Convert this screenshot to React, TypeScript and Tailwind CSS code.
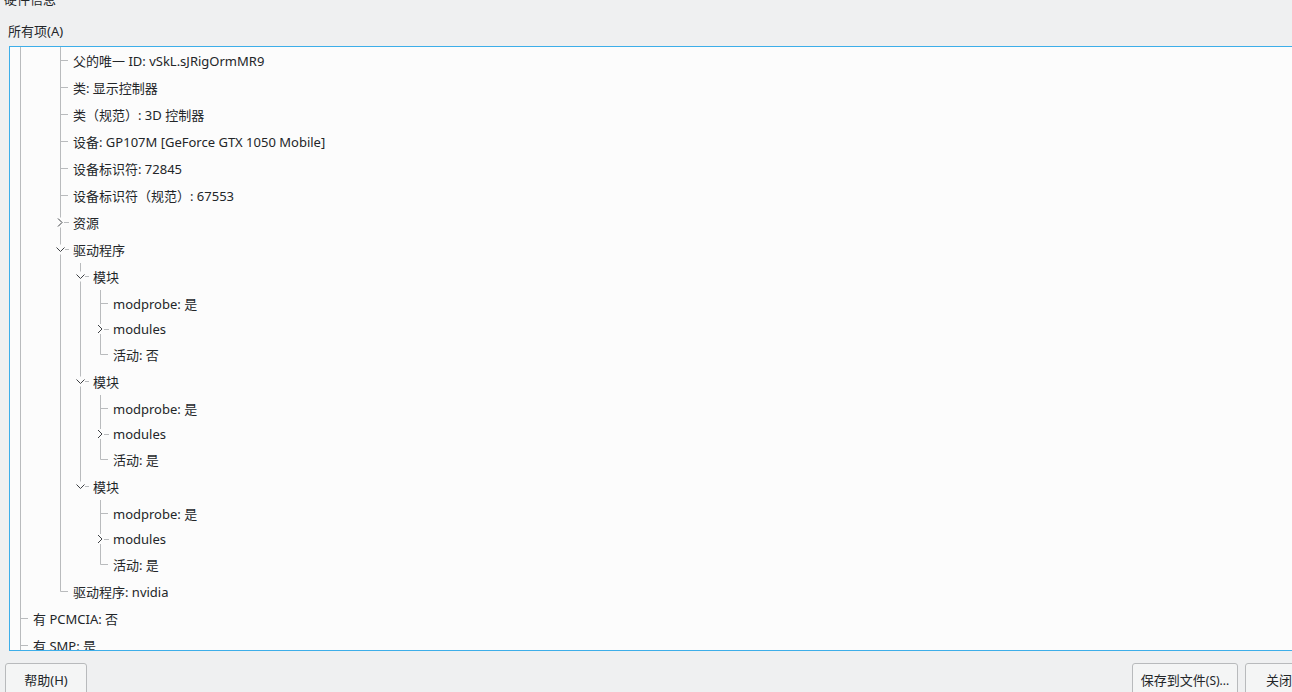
import React from "react";

type Row = {
  depth: number;
  text: string;
  cont: boolean[]; // vertical pass-through lines for ancestor columns
  last?: boolean; // own branch ends at this row
  arrow?: "open" | "closed";
  short?: boolean; // latin-only rows are a bit shorter
};

const L2 = [true, false];
const L3 = [true, false, true];
const L4 = [true, false, true, true];
const L4end = [true, false, true, false];

const ROWS: Row[] = [
  { depth: 2, cont: L2, text: "父的唯一 ID: vSkL.sJRigOrmMR9" },
  { depth: 2, cont: L2, text: "类: 显示控制器" },
  { depth: 2, cont: L2, text: "类（规范）: 3D 控制器" },
  { depth: 2, cont: L2, text: "设备: GP107M [GeForce GTX 1050 Mobile]" },
  { depth: 2, cont: L2, text: "设备标识符: 72845" },
  { depth: 2, cont: L2, text: "设备标识符（规范）: 67553" },
  { depth: 2, cont: L2, text: "资源", arrow: "closed" },
  { depth: 2, cont: L2, text: "驱动程序", arrow: "open" },
  { depth: 3, cont: L3, text: "模块", arrow: "open" },
  { depth: 4, cont: L4, text: "modprobe: 是" },
  { depth: 4, cont: L4, text: "modules", arrow: "closed", short: true },
  { depth: 4, cont: L4, text: "活动: 否", last: true },
  { depth: 3, cont: L3, text: "模块", arrow: "open" },
  { depth: 4, cont: L4, text: "modprobe: 是" },
  { depth: 4, cont: L4, text: "modules", arrow: "closed", short: true },
  { depth: 4, cont: L4, text: "活动: 是", last: true },
  { depth: 3, cont: L3, text: "模块", arrow: "open", last: true },
  { depth: 4, cont: L4end, text: "modprobe: 是" },
  { depth: 4, cont: L4end, text: "modules", arrow: "closed", short: true },
  { depth: 4, cont: L4end, text: "活动: 是", last: true },
  { depth: 2, cont: L2, text: "驱动程序: nvidia", last: true },
  { depth: 0, cont: [], text: "有 PCMCIA: 否" },
  { depth: 0, cont: [], text: "有 SMP: 是" },
];

const LINE = "#b9bbbd";
const INK = "#3d4044";

function Branch({ row, h }: { row: Row; h: number }) {
  const c = h / 2;
  const crisp = Math.floor(c) + 0.5;
  if (!row.arrow) {
    return (
      <svg width={20} height={h} className="shrink-0 block">
        <line x1={10.5} y1={0} x2={10.5} y2={row.last ? crisp : h} stroke={LINE} />
        <line x1={10.5} y1={crisp} x2={18} y2={crisp} stroke={LINE} />
      </svg>
    );
  }
  return (
    <svg width={20} height={h} className="shrink-0 block">
      <line x1={10.5} y1={0} x2={10.5} y2={c - 5} stroke={LINE} />
      {!row.last && <line x1={10.5} y1={c + 5} x2={10.5} y2={h} stroke={LINE} />}
      {row.arrow === "closed" ? (
        <>
          <polyline points={`8,${c - 4} 12,${c} 8,${c + 4}`} fill="none" stroke={INK} strokeWidth={1} />
          <line x1={14} y1={crisp} x2={19} y2={crisp} stroke={LINE} />
        </>
      ) : (
        <>
          <polyline points={`6.5,${c - 2} 10.5,${c + 2} 14.5,${c - 2}`} fill="none" stroke={INK} strokeWidth={1} />
          <line x1={15} y1={crisp} x2={19} y2={crisp} stroke={LINE} />
        </>
      )}
    </svg>
  );
}

function TreeRow({ row }: { row: Row }) {
  const h = row.short ? 24 : 27;
  const cols = Array.from({ length: row.depth }, (_, k) => k);
  return (
    <div className={`flex items-center ${row.short ? "h-[24px]" : "h-[27px]"}`}>
      {cols.map((k) => (
        <svg key={k} width={20} height={h} className="shrink-0 block">
          {row.cont[k] && <line x1={10.5} y1={0} x2={10.5} y2={h} stroke={LINE} />}
        </svg>
      ))}
      <Branch row={row} h={h} />
      <span className="pl-[3px] whitespace-nowrap relative top-[1px]">{row.text}</span>
    </div>
  );
}

export default function App() {
  return (
    <div
      className="w-[1292px] h-[692px] overflow-hidden bg-[#eff0f1] text-[#232629] text-[13px]"
      style={{ fontFamily: '"Noto Sans", "Noto Sans CJK SC", sans-serif' }}
    >
      <div className="w-[1318px] flex flex-col">
        <div className="h-[18px] -mt-[10px] leading-[18px] pl-[4px]">硬件信息</div>
        <div className="h-[18px] mt-[14px] leading-[18px] pl-[8px]">所有项(A)</div>

        <div className="mt-[6px] ml-[9px] mr-[5px] h-[605px] border border-[#3daee9] bg-[#fcfcfc] overflow-hidden">
          {ROWS.map((r, i) => (
            <TreeRow key={i} row={r} />
          ))}
        </div>

        <div className="mt-[12px] flex items-start px-[5px]">
          <button className="w-[82px] h-[36px] border border-[#b8babc] rounded-[3px] bg-[#f4f5f5] text-[13px] text-[#232629]">
            帮助(H)
          </button>
          <div className="flex-1" />
          <button className="w-[106px] h-[36px] border border-[#b8babc] rounded-[3px] bg-[#f4f5f5] text-[13px] text-[#232629] whitespace-nowrap">
            保存到文件<span className="text-[12px]">(S)...</span>
          </button>
          <button className="ml-[7px] w-[68px] h-[36px] border border-[#b8babc] rounded-[3px] bg-[#f4f5f5] text-[13px] text-[#232629]">
            关闭
          </button>
        </div>
      </div>
    </div>
  );
}
